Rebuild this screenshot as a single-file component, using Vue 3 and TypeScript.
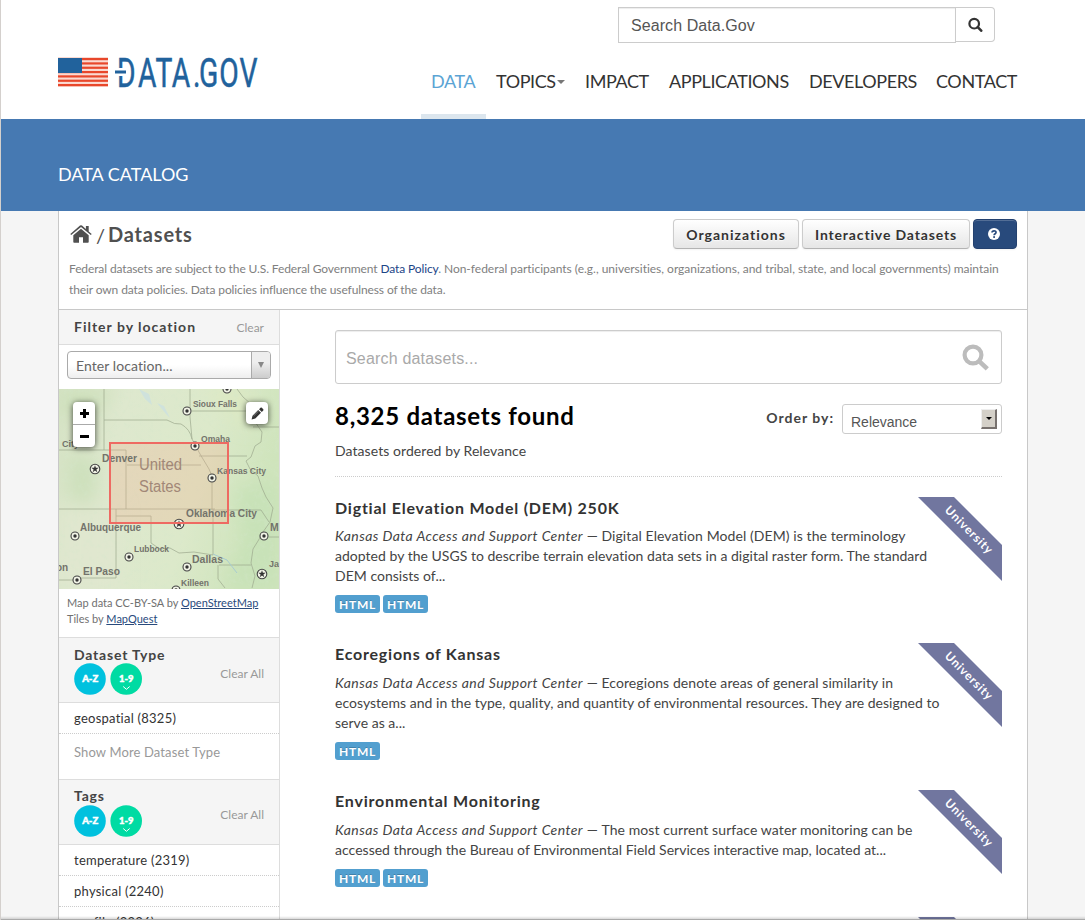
<script setup lang="ts">
interface NavItem { label: string; width: number; active?: boolean; caret?: boolean }
interface Dataset { title: string; org: string; lines: string[]; formats: string[]; height: number; loose?: boolean }
interface Facet { title: string; items: string[]; more?: string }
interface City { name: string; x: number; y: number; size: number; width: number; px: number; py: number; star?: boolean }

const nav: NavItem[] = [
  { label: 'DATA', width: 65, active: true },
  { label: 'TOPICS', width: 89, caret: true },
  { label: 'IMPACT', width: 84 },
  { label: 'APPLICATIONS', width: 140 },
  { label: 'DEVELOPERS', width: 127 },
  { label: 'CONTACT', width: 102 },
]

const org = 'Kansas Data Access and Support Center'
const datasets: Dataset[] = [
  {
    title: 'Digtial Elevation Model (DEM) 250K', org, height: 146,
    lines: ['Digital Elevation Model (DEM) is the terminology', 'adopted by the USGS to describe terrain elevation data sets in a digital raster form. The standard', 'DEM consists of...'],
    formats: ['HTML', 'HTML'],
  },
  {
    title: 'Ecoregions of Kansas', org, height: 147, loose: true,
    lines: ['Ecoregions denote areas of general similarity in', 'ecosystems and in the type, quality, and quantity of environmental resources. They are designed to', 'serve as a...'],
    formats: ['HTML'],
  },
  {
    title: 'Environmental Monitoring', org, height: 127, loose: true,
    lines: ['The most current surface water monitoring can be', 'accessed through the Bureau of Environmental Field Services interactive map, located at...'],
    formats: ['HTML', 'HTML'],
  },
  { title: '', org: '', height: 127, lines: [], formats: [] },
]

const facets: Facet[] = [
  { title: 'Dataset Type', items: ['geospatial (8325)'], more: 'Show More Dataset Type' },
  { title: 'Tags', items: ['temperature (2319)', 'physical (2240)', 'profile (2236)'] },
]

const cities: City[] = [
  { name: 'Sioux Falls', x: 134, y: 18, size: 9, width: 44, px: 128, py: 22 },
  { name: 'Omaha', x: 142, y: 53, size: 9, width: 29, px: 136, py: 57 },
  { name: 'Denver', x: 43, y: 73, size: 10.5, width: 35, px: 36, py: 80, star: true },
  { name: 'Kansas City', x: 158, y: 85, size: 9, width: 49, px: 153, py: 89 },
  { name: 'Oklahoma City', x: 127, y: 128, size: 10.5, width: 71, px: 120, py: 135, star: true },
  { name: 'Albuquerque', x: 21, y: 142, size: 10.5, width: 61, px: 16, py: 147 },
  { name: 'Lubbock', x: 75, y: 163, size: 9, width: 35, px: 70, py: 168 },
  { name: 'Dallas', x: 133, y: 174, size: 10.5, width: 31, px: 128, py: 178 },
  { name: 'El Paso', x: 24, y: 186, size: 10.5, width: 37, px: 18, py: 191 },
  { name: 'Killeen', x: 122, y: 197, size: 9, width: 28, px: 117, py: 201 },
]
</script>

<template>
  <div class="page">
    <header class="top">
      <div class="top-left">
        <svg class="logo" width="202" height="34" viewBox="0 0 202 34">
          <rect x="0" y="1" width="50" height="30" fill="#fadad2" />
          <g fill="#e8472b">
            <rect v-for="n in 7" :key="n" x="0" :y="2 + (n - 1) * 4.33" width="50" height="2.2" />
          </g>
          <rect x="0" y="2" width="24" height="15" fill="#21629c" />
          <text transform="scale(.69 1)" x="85.5 115.9 141.3 165 195.7 204.3 233.8 263" y="31" class="logo-text">DATA.GOV</text>
          <rect x="59" y="12" width="9" height="8" fill="#fff" />
          <rect x="57" y="14.5" width="11" height="3" fill="#21629c" />
        </svg>
      </div>
      <div class="top-right">
        <div class="site-search">
          <div class="site-input">Search Data.Gov</div>
          <div class="site-btn">
            <svg width="15" height="15" viewBox="0 0 15 15" fill="none" stroke="#333">
              <circle cx="6.2" cy="6.7" r="4.8" stroke-width="2.2" />
              <path d="M9.7 10.2 13.2 13.7" stroke-width="2.6" stroke-linecap="round" />
            </svg>
          </div>
        </div>
        <nav class="nav">
          <a v-for="n in nav" :key="n.label" :class="{ active: n.active }" :style="{ width: n.width + 'px' }">{{ n.label }}<i v-if="n.caret" class="caret" /></a>
        </nav>
      </div>
    </header>
    <div class="band">DATA CATALOG</div>

    <div class="wrapper">
      <div class="intro">
        <div class="crumbs">
          <svg width="22" height="18" viewBox="0 0 22 18" fill="#505050">
            <path d="M11 3.7 3.3 10.2V17a.8.8 0 0 0 .8.8H9V12.3h4v5.5h4.9a.8.8 0 0 0 .8-.8v-6.8z" />
            <path d="M21.7 9 18.7 6.4V.9h-2.8v3L12 .6a1.6 1.6 0 0 0-2 0L.3 9l.9 1.1L11 1.9l9.8 8.2z" />
          </svg>
          <span class="slash">/</span>
          <strong>Datasets</strong>
          <div class="actions">
            <a class="btn organizations">Organizations</a>
            <a class="btn interactive">Interactive Datasets</a>
            <a class="btn help">
              <svg width="12" height="12" viewBox="0 0 12 12"><circle cx="6" cy="6" r="6" fill="#fff" /><path d="M4 4.5C4.1 2.2 8.1 2.2 8 4.5 8 5.8 6.1 5.6 6.1 7.2" fill="none" stroke="#284a7c" stroke-width="1.7" /><rect x="5.2" y="8.2" width="1.8" height="1.7" fill="#284a7c" /></svg>
            </a>
          </div>
        </div>
        <p class="notice"><span class="tight">Federal datasets are subject to the U.S. Federal Government <a>Data Policy</a>. </span><span>Non-federal participants (e.g., universities, organizations, and tribal, state, and local governments) maintain</span><br><span class="tight">their own data policies. Data policies influence the usefulness of the data.</span></p>
      </div>

      <div class="columns">
        <aside class="side">
          <h2 class="loc-head"><span>Filter by location</span><small>Clear</small></h2>
          <div class="loc-select"><span>Enter location...</span><b><i /></b></div>
          <div class="map">
            <svg width="220" height="200" viewBox="0 0 220 200">
              <defs>
                <linearGradient id="land" x1="0" y1="0" x2="1" y2="0.25">
                  <stop offset="0" stop-color="#d5e2c4" />
                  <stop offset="0.3" stop-color="#dee8ce" />
                  <stop offset="0.7" stop-color="#dce9ca" />
                  <stop offset="1" stop-color="#cfe4bc" />
                </linearGradient>
                <filter id="soft" x="-40%" y="-40%" width="180%" height="180%"><feGaussianBlur stdDeviation="9" /></filter>
                <filter id="speckle"><feTurbulence type="fractalNoise" baseFrequency=".2" numOctaves="3" seed="6" /><feColorMatrix values="0 0 0 0 .66  0 0 0 0 .8  0 0 0 0 .6  2.6 0 0 0 -1.25" /></filter>
              </defs>
              <rect width="220" height="200" fill="url(#land)" />
              <g filter="url(#soft)">
                <path d="M8 65 38 70 36 120 10 125z" fill="#cde0bc" />
                <path d="M175 100 220 90V200H165L185 150z" fill="#c8e2b8" />
                <path d="M0 115H60V200H0z" fill="#e0e7cf" />
                <path d="M0 0H55L30 30 0 25z" fill="#cee0bb" />
                <path d="M145 0H190V40z" fill="#dde9c2" />
              </g>
              <rect width="220" height="200" filter="url(#speckle)" opacity=".3" />
              <path d="M80 0 86 10 93 16 90 5zM98 14 107 25 111 29 105 17z" fill="#cfe2dc" />
              <g fill="none" stroke="#9aa68c" stroke-width=".8" opacity=".85">
                <path d="M45 0V61M45 31H108Q116 36 122 35 131 40 133 50L141 65 150 80 153 87V121" />
                <path d="M131 0V28L133 50M133 22H187M0 61H67V120M68 76H142M140 67H188M0 120H156M57 120V189H18M57 127H92V154L101 160 111 159 120 164 135 163 154 166M154 120V166" />
                <path d="M178 0 184 8 192 15 194 30 203 43 202 53 196 57 192 68 187 72 191 80 199 87 203 99 207 108 214 119 211 133 204 143 199 152 194 160 192 174 196 187 193 199" />
                <path d="M194 38H220M154 121 202 121 210 133M160 176H192M159 176V190L166 199M210 148H220M18 191H0" />
              </g>
              <path d="M154 165 168 171 178 184" fill="none" stroke="#a8cbd0" />
              <rect x="51" y="54" width="118" height="79" fill="#f4ac8c" fill-opacity=".28" />
              <g fill="#73736b" font-weight="bold">
                <text v-for="c in cities" :key="c.name" :x="c.x" :y="c.y" :font-size="c.size" :textLength="c.width" lengthAdjust="spacingAndGlyphs">{{ c.name }}</text>
                <text x="3" y="58" font-size="9">City</text>
                <text x="211" y="142" font-size="10.5">M</text>
                <text x="210" y="178" font-size="9">Ja</text>
                <text x="-3" y="182" font-size="10">on</text>
              </g>
              <g fill="#a18777" font-size="16">
                <text x="80" y="81" textLength="43" lengthAdjust="spacingAndGlyphs">United</text>
                <text x="80" y="103" textLength="42" lengthAdjust="spacingAndGlyphs">States</text>
              </g>
              <g v-for="c in cities" :key="'p' + c.name" :transform="`translate(${c.px} ${c.py})`">
                <circle :r="c.star ? 4.8 : 4" fill="#f1f3e6" stroke="#444" stroke-width="1.1" />
                <path v-if="c.star" d="M0-3.8.9-1.2H3.7L1.4.5 2.3 3.2 0 1.6-2.3 3.2-1.4.5-3.7-1.2H-.9z" fill="#333" />
                <circle v-else r="1.7" fill="#333" />
              </g>
              <g fill="#f1f3e6" stroke="#444" stroke-width="1.1"><circle cx="168" cy="0" r="4" /><circle cx="205" cy="147" r="4" /><circle cx="203" cy="185" r="4.8" /></g>
              <g fill="#333"><circle cx="168" cy="0" r="1.7" /><circle cx="205" cy="147" r="1.7" /><path transform="translate(203 185)" d="M0-3.8.9-1.2H3.7L1.4.5 2.3 3.2 0 1.6-2.3 3.2-1.4.5-3.7-1.2H-.9z" /></g>
              <rect x="51" y="54" width="118" height="80" fill="none" stroke="#ee6a62" stroke-width="2" />
            </svg>
            <div class="zoom"><span class="plus" /><span class="minus" /></div>
            <div class="draw">
              <svg width="13" height="13" viewBox="0 0 13 13"><path d="M.6 12.4 1.5 8.7 7.2 3 10 5.8 4.3 11.5zM8 2.2 9.5.8q.7-.6 1.4 0l1.3 1.4q.6.7 0 1.4L10.8 5z" fill="#333" /><path d="M2.6 8.9 7.6 4" stroke="#999" stroke-width=".7" /></svg>
            </div>
          </div>
          <p class="credit"><span class="osm">Map data CC-BY-SA by <a>OpenStreetMap</a></span><br><span>Tiles by <a>MapQuest</a></span></p>

          <section v-for="f in facets" :key="f.title" class="facet">
            <h2>
              <span class="facet-title">{{ f.title }}</span>
              <span class="sorts">
                <svg width="70" height="32" viewBox="0 0 70 32">
                  <circle cx="16" cy="16" r="15.8" fill="#00c1de" /><circle cx="52.2" cy="16" r="15.8" fill="#00dba3" />
                  <g fill="#fff" stroke="#fff" stroke-width=".45" class="sort-text"><text x="8.2" y="18.8" textLength="16" lengthAdjust="spacingAndGlyphs">A-Z</text><text x="45" y="18.8" textLength="14.5" lengthAdjust="spacingAndGlyphs">1-9</text></g>
                  <path d="M49.2 23.5 52.4 26.3 55.7 23.5" fill="none" stroke="#fff" stroke-width="1" />
                </svg>
              </span>
              <small>Clear All</small>
            </h2>
            <ul>
              <li v-for="i in f.items" :key="i">{{ i }}</li>
            </ul>
            <p v-if="f.more" class="more">{{ f.more }}</p>
          </section>
        </aside>

        <main class="main">
          <div class="search">
            <span>Search datasets...</span>
            <svg width="28" height="28" viewBox="0 0 28 28" fill="none" stroke="#bcbcbc"><circle cx="11" cy="11" r="8.4" stroke-width="4.2" /><path d="M16.8 16.8 25.3 24.8" stroke-width="4.6" /></svg>
          </div>
          <div class="summary">
            <h1>8,325 datasets found</h1>
            <label>Order by:</label>
            <div class="order"><span>Relevance</span><b><i /></b></div>
          </div>
          <p class="ordered">Datasets ordered by Relevance</p>
          <article v-for="(d, k) in datasets" :key="k" :class="{ loose: d.loose }" :style="{ height: d.height + 'px' }">
            <div class="ribbon"><span>University</span></div>
            <h3>{{ d.title }}</h3>
            <p v-if="d.org" class="desc"><template v-for="(l, j) in d.lines" :key="j"><template v-if="j === 0"><em>{{ d.org }}</em> — </template><br v-else><span :class="{ lead: j === 0 }">{{ l }}</span></template></p>
            <div class="tags"><span v-for="(t, j) in d.formats" :key="j">{{ t }}</span></div>
          </article>
        </main>
      </div>
    </div>
    <div class="bottom-edge" />
  </div>
</template>

<style>
html, body { margin: 0; background: #f5f5f5; overflow: hidden; }
</style>

<style scoped>
* { box-sizing: border-box; }
.page { position: relative; width: 1085px; height: 920px; overflow: hidden; background: #f5f5f5; border-left: 1px solid #d4d0cd; font-family: Lato, sans-serif; color: #444; font-size: 14px; line-height: 20px; }
h1, h2, h3, p, ul { margin: 0; padding: 0; font-weight: normal; }
ul { list-style: none; }
svg { display: block; }
.top { height: 119px; background: #fff; display: flex; justify-content: space-between; padding: 0 57px; }
.top-left { padding-top: 56px; }
.logo { overflow: visible; }
.logo-text { font: 400 41px Roboto, sans-serif; fill: #21629c; stroke: #21629c; stroke-width: .5px; }
.top-right { display: flex; flex-direction: column; align-items: flex-end; }
.site-search { display: flex; margin: 7px 33px 0 0; height: 36px; align-items: flex-start; }
.site-input { width: 338px; height: 36px; border: 1px solid #ccc; padding: 0 12px; font: 16px/36px "Liberation Sans", Arial, sans-serif; letter-spacing: .08px; color: #555; box-shadow: inset 0 1px 1px rgba(0,0,0,.075); }
.site-btn { width: 39px; height: 35px; border: 1px solid #ccc; border-left: 0; border-radius: 0 4px 4px 0; display: grid; place-items: center; }
.nav { display: flex; margin-top: 2px; }
.nav a { height: 74px; padding: 25px 0 0 10px; font-size: 18px; line-height: 22px; letter-spacing: -.4px; color: #333; white-space: nowrap; }
.nav a.active { color: #5ba4d4; border-bottom: 5px solid #dce6ee; }
.caret { display: inline-block; margin-left: 1px; vertical-align: 4px; border: 4px solid transparent; border-top-color: #777; border-bottom: 0; }
.band { height: 92px; background: #4679b2; color: #fff; padding: 43px 0 0 57px; font-size: 18px; line-height: 24px; }
.wrapper { margin-left: 57px; width: 970px; height: 720px; background: #fff; border: solid #c8c8c8; border-width: 0 1px; }
.intro { height: 99px; border-bottom: 1px solid #c8c8c8; padding: 8px 10px 0; }
.crumbs { display: flex; align-items: center; height: 30px; padding-left: 1px; font-size: 20px; color: #505050; }
.slash { margin: 1px 0 0 4px; }
.crumbs strong { margin-left: 3px; letter-spacing: .8px; }
.actions { display: flex; gap: 3px; margin-left: auto; }
.btn { height: 30px; border: 1px solid #ccc; border-bottom-color: #b3b3b3; border-radius: 4px; background: linear-gradient(#fff, #e6e6e6); box-shadow: inset 0 1px 0 rgba(255,255,255,.2), 0 1px 2px rgba(0,0,0,.05); font-size: 14px; font-weight: bold; letter-spacing: 1px; line-height: 29px; color: #333; text-align: center; text-shadow: 0 1px 1px rgba(255,255,255,.75); }
.organizations { width: 126px; }
.interactive { width: 168px; letter-spacing: .85px; }
.help { width: 44px; background: #284a7c; border-color: #24416f; display: grid; place-items: center; padding-right: 2px; }
.notice { margin-top: 9px; font-size: 12px; line-height: 21px; letter-spacing: -.01px; color: #808080; white-space: nowrap; }
.notice .tight { letter-spacing: -.115px; }
.notice a { color: #1c4587; }
.columns { display: flex; height: 620px; }
.side { width: 221px; flex: none; border-right: 1px solid #ddd; }
.loc-head { height: 35px; display: flex; justify-content: space-between; padding: 0 15px; background: #f5f5f5; border-bottom: 1px solid #ddd; font-size: 14px; line-height: 34px; font-weight: bold; letter-spacing: 1px; }
small { font-size: 12px; font-weight: normal; letter-spacing: 0; color: #999; }
.loc-head small { line-height: 36px; }
.loc-select { margin: 6px 8px 0; height: 28px; border: 1px solid #aaa; border-radius: 4px; display: flex; overflow: hidden; background: linear-gradient(#fff 50%, #eee); line-height: 28px; letter-spacing: .08px; color: #666; }
.loc-select span { flex: 1; padding-left: 8px; }
.loc-select b { width: 19px; border-left: 1px solid #aaa; background: linear-gradient(#eee 40%, #ccc); display: grid; place-items: center; }
.loc-select i { border: 3.5px solid transparent; border-top: 6px solid #888; border-bottom: 0; }
.map { position: relative; height: 200px; margin-top: 10px; overflow: hidden; font-family: "Liberation Sans", Arial, sans-serif; }
.zoom, .draw { position: absolute; background: #fff; border-radius: 4px; box-shadow: 0 1px 6px rgba(0,0,0,.7); }
.zoom { left: 14px; top: 13px; width: 22px; height: 45px; }
.zoom span { display: grid; height: 22px; place-items: center; }
.zoom .plus { border-bottom: 1px solid #aaa; height: 23px; }
.zoom span::before, .plus::after { content: ""; grid-area: 1 / 1; background: #000; width: 9px; height: 3px; }
.zoom .plus::after { width: 3px; height: 9px; }
.draw { left: 187px; top: 13px; width: 22px; height: 22px; display: grid; place-items: center; }
.credit { height: 48px; padding: 6px 8px 0; font-size: 11px; line-height: 16px; color: #707070; white-space: nowrap; }
.credit a { color: #284a7c; text-decoration: underline; }
.facet h2 { display: grid; grid-template-columns: 1fr auto; height: 66px; padding: 7px 15px 0; background: #f5f5f5; border: solid #ddd; border-width: 1px 0; align-content: start; }
.facet-title { grid-column: 1 / 3; font-size: 14px; line-height: 19px; height: 18px; font-weight: bold; letter-spacing: .8px; }
.facet + .facet .facet-title { line-height: 17px; }
.facet small { line-height: 21px; }
.facet + .facet small { line-height: 19px; }
.sort-text { font: 900 9px Lato, sans-serif; }
.facet li { height: 31px; padding-left: 15px; font-size: 13px; line-height: 31px; letter-spacing: .25px; border-bottom: 1px dotted #ccc; color: #333; }
.more { height: 45px; padding: 8px 15px; font-size: 13px; line-height: 20px; letter-spacing: .13px; color: #999; }
.main { flex: 1; padding: 20px 25px 0 55px; }
.search { height: 54px; display: flex; align-items: center; justify-content: space-between; padding: 1px 11px 0 10px; border: 1px solid #ccc; border-radius: 3px; box-shadow: inset 0 1px 1px rgba(0,0,0,.075); font: 16px "Liberation Sans", Arial, sans-serif; letter-spacing: .18px; color: #a9a9a9; }
.search span { padding-top: 3px; }
.search svg { margin-top: 1px; }
.summary { display: flex; align-items: center; margin-top: 20px; height: 30px; }
h1 { font-size: 24px; font-weight: bold; color: #000; line-height: 28px; letter-spacing: .72px; padding-bottom: 7px; white-space: nowrap; }
label { margin-left: auto; margin-right: 8px; font-weight: bold; letter-spacing: 1px; padding-bottom: 2px; }
.order { width: 160px; height: 30px; border: 1px solid #ccc; border-radius: 3px; display: flex; justify-content: space-between; padding: 4px 4px 0 8px; font: 14px/27px "Liberation Sans", Arial, sans-serif; color: #555; }
.order b { width: 16px; height: 20px; background: #d4d0c8; border: 1px solid #eee; border-right: 2px solid #77716e; border-bottom: 2px solid #77716e; display: grid; place-items: center; }
.order i { border: 3px solid transparent; border-top-color: #000; border-bottom: 0; }
.ordered { height: 43px; padding-top: 7px; border-bottom: 1px dotted #ccc; margin-bottom: 20px; letter-spacing: .07px; }
article { position: relative; }
h3 { height: 29px; font-size: 16px; line-height: 21px; font-weight: bold; letter-spacing: .78px; color: #333; white-space: nowrap; }
.loose h3 { height: 30px; }
.desc { line-height: 20px; letter-spacing: .02px; white-space: nowrap; }
.desc em { letter-spacing: .43px; }
.desc .lead { letter-spacing: .09px; }
.tags { display: flex; gap: 3px; margin-top: 9px; }
.tags span { width: 45px; height: 18px; background: #529fcf; border-radius: 3px; color: #fff; font-size: 12px; font-weight: bold; letter-spacing: .8px; line-height: 19px; text-align: center; text-shadow: 0 -1px 0 rgba(0,0,0,.2); }
.ribbon { position: absolute; right: 0; top: 0; width: 84px; height: 84px; overflow: hidden; background: #71769f; clip-path: polygon(0 0, 36px 0, 100% 48px, 100% 100%); }
.ribbon span { position: absolute; left: 11px; top: 23px; width: 80px; color: #fff; font-size: 12px; line-height: 20px; font-weight: bold; letter-spacing: .8px; text-align: center; transform: rotate(45deg); }
.bottom-edge { position: absolute; left: 0; right: 0; bottom: 0; height: 4px; background: linear-gradient(transparent, rgba(0,0,0,.15)); border-bottom: 1px solid #aaa; }
</style>
